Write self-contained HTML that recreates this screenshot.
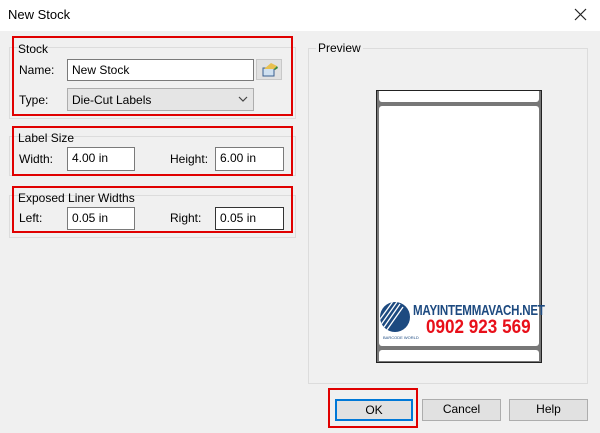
<!DOCTYPE html>
<html><head><style>
body{margin:0;width:600px;height:433px;position:relative;background:#f0f0f0;font-family:"Liberation Sans",sans-serif;font-size:12px;color:#000;overflow:hidden}
.a{position:absolute}
.title{left:0;top:0;width:600px;height:31px;background:#fff}
.grp{border:1px solid #dcdcdc;box-sizing:border-box}
.red{border:2px solid #e00000;box-sizing:border-box}
.inp{background:#fff;border:1px solid #7a7a7a;box-sizing:border-box;padding:3px 0 0 4px;font-size:12px}
.lbl{background:#f0f0f0;padding:0 2px}
.btn{background:#e1e1e1;border:1px solid #adadad;box-sizing:border-box;text-align:center;line-height:19px}
</style></head><body>
<div class="a title"></div>
<div class="a" style="left:8px;top:7px;font-size:13px">New Stock</div>
<svg class="a" style="left:574px;top:8px" width="13" height="13"><path d="M1 1L12 12M12 1L1 12" stroke="#222" stroke-width="1.2"/></svg>

<div class="a grp" style="left:9px;top:47px;width:287px;height:72px"></div>
<div class="a grp" style="left:9px;top:136px;width:287px;height:40px"></div>
<div class="a grp" style="left:9px;top:195px;width:287px;height:43px"></div>
<div class="a red" style="left:12px;top:36px;width:281px;height:80px"></div>
<div class="a red" style="left:12px;top:126px;width:281px;height:50px"></div>
<div class="a red" style="left:12px;top:186px;width:281px;height:47px"></div>

<div class="a" style="left:18px;top:42px">Stock</div>
<div class="a" style="left:19px;top:63px">Name:</div>
<div class="a inp" style="left:67px;top:59px;width:187px;height:22px">New Stock</div>
<div class="a" style="left:256px;top:59px;width:26px;height:21px;background:#e1e1e1;border:1px solid #c8c8c8;box-sizing:border-box">
<svg width="24" height="19"><rect x="6" y="8" width="11" height="8" fill="#cfe0f0" stroke="#3a5f8f"/><path d="M7 9L14 3L20 6L17 9Z" fill="#e8c050"/><path d="M17 9L20 6L21 8L18 10Z" fill="#3a8a3a"/></svg></div>
<div class="a" style="left:19px;top:93px">Type:</div>
<div class="a" style="left:67px;top:88px;width:187px;height:23px;background:#e5e5e5;border:1px solid #adadad;box-sizing:border-box;padding:4px 0 0 4px">Die-Cut Labels</div>
<svg class="a" style="left:238px;top:96px" width="10" height="7"><path d="M1 1L5 5L9 1" stroke="#444" fill="none" stroke-width="1.2"/></svg>

<div class="a" style="left:18px;top:131px">Label Size</div>
<div class="a" style="left:19px;top:152px">Width:</div>
<div class="a inp" style="left:67px;top:147px;width:68px;height:24px">4.00 in</div>
<div class="a" style="left:170px;top:152px">Height:</div>
<div class="a inp" style="left:215px;top:147px;width:69px;height:24px">6.00 in</div>

<div class="a" style="left:18px;top:191px">Exposed Liner Widths</div>
<div class="a" style="left:19px;top:211px">Left:</div>
<div class="a inp" style="left:67px;top:207px;width:68px;height:23px">0.05 in</div>
<div class="a" style="left:170px;top:211px">Right:</div>
<div class="a inp" style="left:215px;top:207px;width:69px;height:23px;border-color:#333">0.05 in</div>

<div class="a grp" style="left:308px;top:48px;width:280px;height:336px"></div>
<div class="a lbl" style="left:316px;top:41px">Preview</div>
<div class="a" style="left:376px;top:90px;width:166px;height:273px;background:#777;border:1px solid #222;box-sizing:border-box"></div>
<div class="a" style="left:379px;top:91px;width:160px;height:11px;background:#fff;border-radius:0 0 3px 3px"></div>
<div class="a" style="left:379px;top:106px;width:160px;height:240px;background:#fff;border-radius:3px"></div>
<div class="a" style="left:379px;top:350px;width:160px;height:11px;background:#fff;border-radius:3px 3px 0 0"></div>
<svg class="a" style="left:380px;top:302px" width="32" height="32"><defs><clipPath id="c"><circle cx="15" cy="15" r="15"/></clipPath></defs><circle cx="15" cy="15" r="15" fill="#1d4a80"/><g clip-path="url(#c)" stroke="#fff" stroke-width="1.3"><path d="M-2 20L14 -2M0 24L17 0M2 28L20 2M4 32L23 5"/></g></svg>
<div class="a" style="left:383px;top:335px;font-size:4px;color:#1d4a80">BARCODE WORLD</div>
<div class="a" style="left:413px;top:302px;font-size:15px;font-weight:bold;color:#1d4a80;letter-spacing:-0.3px;transform:scaleX(0.77);transform-origin:left">MAYINTEMMAVACH.NET</div>
<div class="a" style="left:426px;top:317px;font-size:19px;font-weight:bold;color:#e8101a;transform:scaleX(0.9);transform-origin:left">0902 923 569</div>

<div class="a red" style="left:328px;top:388px;width:90px;height:40px"></div>
<div class="a btn" style="left:335px;top:399px;width:78px;height:22px;border:2px solid #0078d7;line-height:18px">OK</div>
<div class="a btn" style="left:422px;top:399px;width:79px;height:22px">Cancel</div>
<div class="a btn" style="left:509px;top:399px;width:79px;height:22px">Help</div>
</body></html>
